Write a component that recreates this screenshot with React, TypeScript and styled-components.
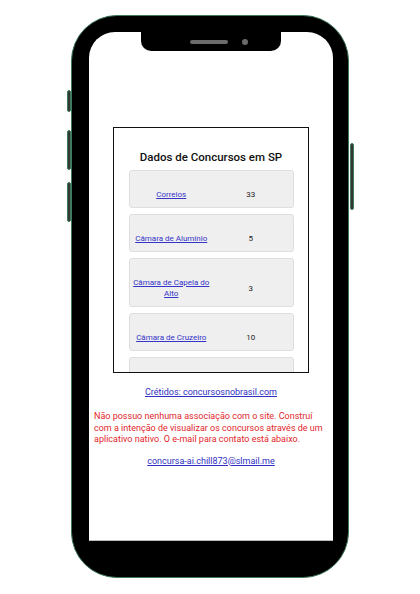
import React from "react";
import styled, { createGlobalStyle } from "styled-components";

interface Concurso {
  nome: string;
  total: number;
}

const concursos: Concurso[] = [
  { nome: "Correios", total: 33 },
  { nome: "Câmara de Alumínio", total: 5 },
  { nome: "Câmara de Capela do Alto", total: 3 },
  { nome: "Câmara de Cruzeiro", total: 10 },
  { nome: "Câmara de Guarulhos", total: 2 },
];

const App: React.FunctionComponent = () => {
  return (
    <Stage>
      <GlobalStyle />
      <Phone>
        <SideButton side="left" top={74} h={22} />
        <SideButton side="left" top={114} h={40} />
        <SideButton side="left" top={166} h={40} />
        <SideButton side="right" top={127} h={67} />
        <Screen>
          <Notch>
            <Speaker />
            <Camera />
          </Notch>
          <DataBox>
            <Title>Dados de Concursos em SP</Title>
            <CardList>
              {concursos.map((c) => (
                <Card key={c.nome}>
                  <Cell>
                    <CardLink href="#">{c.nome}</CardLink>
                  </Cell>
                  <Cell>{c.total}</Cell>
                </Card>
              ))}
            </CardList>
          </DataBox>
          <Credits $top={13}>
            <FooterLink href="#">Crétidos: concursosnobrasil.com</FooterLink>
          </Credits>
          <Disclaimer>
            Não possuo nenhuma associação com o site. Construí com a intenção de
            visualizar os concursos através de um aplicativo nativo. O e-mail para
            contato está abaixo.
          </Disclaimer>
          <Credits $top={9}>
            <FooterLink href="#">concursa-ai.chill873@slmail.me</FooterLink>
          </Credits>
        </Screen>
      </Phone>
    </Stage>
  );
};

const GlobalStyle = createGlobalStyle`
  body {
    margin: 0;
    background-color: #ffffff;
    font-family: Roboto, "Open Sans", sans-serif;
  }
`;

const Stage = styled.div`
  width: 420px;
  height: 594px;
  display: flex;
  justify-content: center;
  padding-top: 15px;
  box-sizing: border-box;
`;

const Phone = styled.div`
  position: relative;
  width: 278px;
  height: 563px;
  box-sizing: border-box;
  background-color: #000;
  border: 1.5px solid #3f7a5d;
  border-radius: 46px;
  padding: 16px 15px 36px 17px;
`;

const SideButton = styled.div<{ side: "left" | "right"; top: number; h: number }>`
  position: absolute;
  top: ${(p) => p.top}px;
  ${(p) => (p.side === "left" ? "left: -5px;" : "right: -6px;")}
  width: 4px;
  height: ${(p) => p.h}px;
  background-color: #333836;
  border-radius: 2px;
  border: 1px solid #3f7a5d;
  box-sizing: border-box;
`;

const Screen = styled.div`
  position: relative;
  height: 100%;
  background-color: #fff;
  border-radius: 26px 26px 0 0;
  border-bottom: 1px solid #bdbdbd;
  box-sizing: border-box;
  padding: 95px 5px 0 5px;
  overflow: hidden;
`;

const Notch = styled.div`
  position: absolute;
  top: 0;
  left: 52px;
  width: 140px;
  height: 19px;
  background-color: #000;
  border-radius: 0 0 10px 10px;
  display: flex;
  align-items: center;
  justify-content: center;
  gap: 14px;
  padding-left: 16px;
  box-sizing: border-box;
`;

const Speaker = styled.div`
  width: 38px;
  height: 4px;
  border-radius: 2px;
  background-color: #6b6b6b;
`;

const Camera = styled.div`
  width: 6px;
  height: 6px;
  border-radius: 50%;
  background-color: #6b6b6b;
`;

const DataBox = styled.div`
  width: 196px;
  height: 246px;
  margin: 0 auto;
  border: 1.5px solid #111;
  box-sizing: border-box;
  overflow: hidden;
`;

const Title = styled.h2`
  margin: 21px 0 5px 0;
  text-align: center;
  font-size: 11.5px;
  line-height: 16px;
  font-weight: 500;
  color: #111;
`;

const CardList = styled.div`
  display: flex;
  flex-direction: column;
  gap: 6px;
  padding: 0 14.5px;
`;

const Card = styled.div`
  display: flex;
  align-items: center;
  padding: 18px 2px 7px 2px;
  background-color: #efefef;
  border: 1px solid #dedede;
  border-radius: 3px;
  font-size: 8px;
  line-height: 11px;
  color: #222;
`;

const Cell = styled.div`
  flex: 1;
  text-align: center;
`;

const CardLink = styled.a`
  color: #3434c8;
  text-decoration: underline;
`;

const Credits = styled.p<{ $top: number }>`
  margin: ${(p) => p.$top}px 0 0 0;
  text-align: center;
  font-size: 9px;
  line-height: 12px;
`;

const FooterLink = styled.a`
  color: #2f2fc2;
  text-decoration: underline;
`;

const Disclaimer = styled.p`
  margin: 13px 0 0 0;
  font-size: 9px;
  line-height: 11.5px;
  color: #e2262b;
`;

export default App;
